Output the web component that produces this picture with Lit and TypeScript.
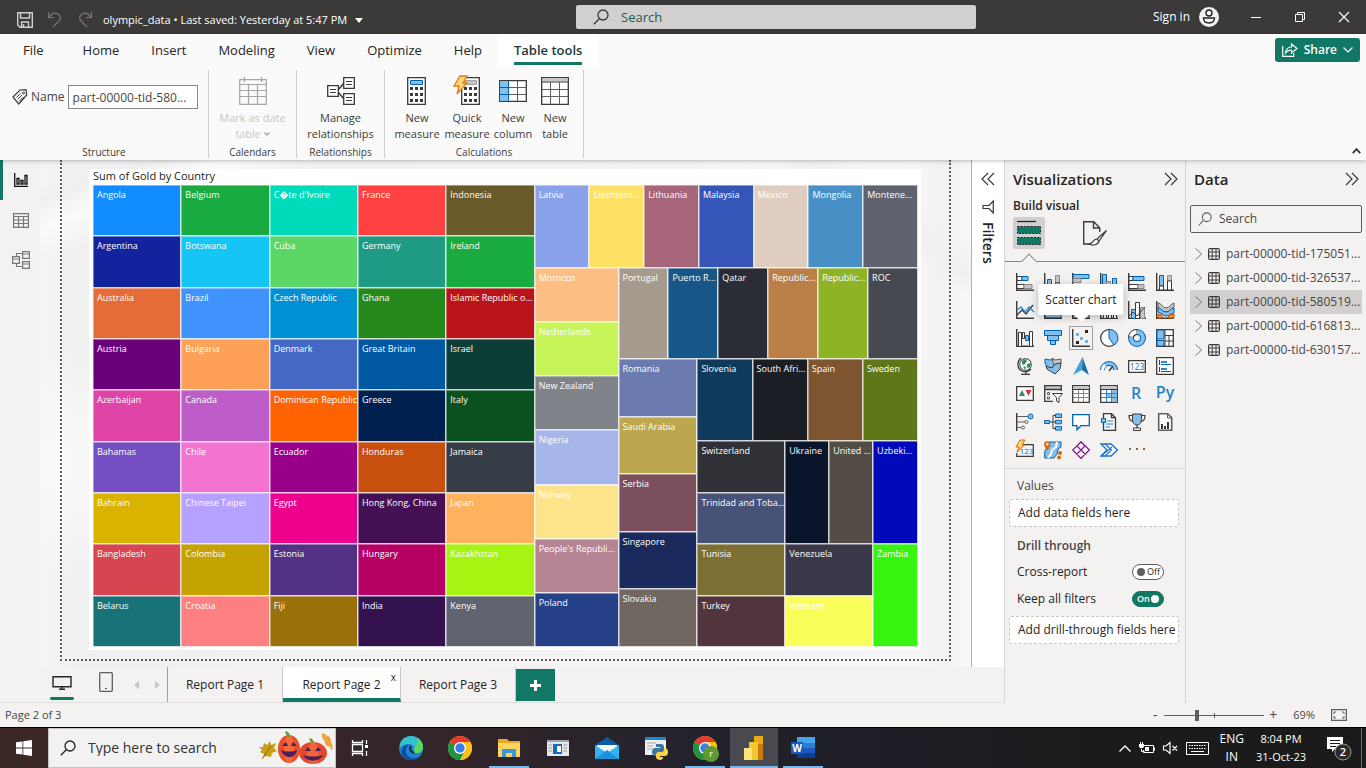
import { LitElement, html, svg, css, nothing, TemplateResult, SVGTemplateResult } from "lit";
import { customElement } from "lit/decorators.js";
import { classMap } from "lit/directives/class-map.js";
import { styleMap } from "lit/directives/style-map.js";

const D = "#3b3a39";
const B = "#0063b1";
const L = "#83beec";
const G = "#c8c6c4";

const icon = (w: number, h: number, body: SVGTemplateResult, box = `0 0 ${w} ${h}`) =>
  html`<svg width=${w} height=${h} viewBox=${box} fill="none" aria-hidden="true">${body}</svg>`;

/* ---------- treemap ---------- */

interface Leaf { size: number; name: string; color: string }
interface Branch { size: number; dir: "row" | "column"; items: Area[] }
type Area = Leaf | Branch;

const t = (name: string, color: string, size = 1): Leaf => ({ name, color, size });
const row = (size: number, ...items: Area[]): Branch => ({ dir: "row", size, items });
const col = (size: number, ...items: Area[]): Branch => ({ dir: "column", size, items });

const medals = row(1,
  col(88, t("Angola", "#118dff"), t("Argentina", "#12239e"), t("Australia", "#e66c37"), t("Austria", "#6b007b"),
    t("Azerbaijan", "#e044a7"), t("Bahamas", "#744ec2"), t("Bahrain", "#d9b300"), t("Bangladesh", "#d64550"), t("Belarus", "#197278")),
  col(88, t("Belgium", "#1aab40"), t("Botswana", "#15c6f4"), t("Brazil", "#4092ff"), t("Bulgaria", "#ffa058"),
    t("Canada", "#be5dc9"), t("Chile", "#f472d0"), t("Chinese Taipei", "#b5a1ff"), t("Colombia", "#c4a200"), t("Croatia", "#ff8080")),
  col(88, t("C\uFFFDte d'Ivoire", "#00dbbc"), t("Cuba", "#5bd667"), t("Czech Republic", "#0091d5"), t("Denmark", "#4668c5"),
    t("Dominican Republic", "#ff6300"), t("Ecuador", "#99008a"), t("Egypt", "#ec008c"), t("Estonia", "#533285"), t("Fiji", "#99700a")),
  col(88, t("France", "#ff4141"), t("Germany", "#1f9a85"), t("Ghana", "#25891c"), t("Great Britain", "#0057a2"),
    t("Greece", "#002050"), t("Honduras", "#c94f0f"), t("Hong Kong, China", "#450f54"), t("Hungary", "#b60064"), t("India", "#34124f")),
  col(88, t("Indonesia", "#6a5a29"), t("Ireland", "#1aab40"), t("Islamic Republic o...", "#ba141a"), t("Israel", "#0c3d37"),
    t("Italy", "#0b511f"), t("Jamaica", "#373d47"), t("Japan", "#ffb25e"), t("Kazakhstan", "#a6f412"), t("Kenya", "#60646e")),
  col(382,
    row(83, t("Latvia", "#8aa2ea"), t("Liechtens...", "#fee165"), t("Lithuania", "#a66578"), t("Malaysia", "#3555b8"),
      t("Mexico", "#dfcebf"), t("Mongolia", "#4891c7"), t("Montene...", "#5f636d")),
    row(379,
      col(84, t("Morocco", "#fcbe83"), t("Netherlands", "#c7f459"), t("New Zealand", "#7f838a"), t("Nigeria", "#a6b6eb"),
        t("Norway", "#fde48a"), t("People's Republi...", "#b58593"), t("Poland", "#274189")),
      col(300,
        row(91, t("Portugal", "#a59a8d"), t("Puerto R...", "#165788"), t("Qatar", "#2a2d35"), t("Republic...", "#ba8048"),
          t("Republic...", "#8eb426"), t("ROC", "#474951")),
        row(288,
          col(79, t("Romania", "#6b7bb0"), t("Saudi Arabia", "#bca74e"), t("Serbia", "#7b4f5b"), t("Singapore", "#1b2a5c"), t("Slovakia", "#706760")),
          col(221,
            row(82, t("Slovenia", "#0f3a5b"), t("South Afri...", "#1c1e25"), t("Spain", "#7d5530"), t("Sweden", "#5e7819")),
            row(206,
              col(88, t("Switzerland", "#303137"), t("Trinidad and Toba...", "#475376"), t("Tunisia", "#7d6f34"), t("Turkey", "#52353c")),
              col(88, row(2, t("Ukraine", "#0a142b"), t("United ...", "#534d46")), t("Venezuela", "#3a3748"), t("Vietnam", "#fafe5b")),
              col(45, t("Uzbeki...", "#000abb"), t("Zambia", "#36f50f"))
            )
          )
        )
      )
    )
  )
);

@customElement("tree-map")
class TreeMap extends LitElement {
  static styles = css`
    :host { display: flex; min-height: 0; font: 500 9px/12px "Open Sans", "Noto Sans", sans-serif; }
    .branch { display: flex; flex-basis: 0; min-width: 0; min-height: 0; }
    .column { flex-direction: column; }
    .tile {
      flex-basis: 0; min-width: 0; min-height: 0; color: #fff; white-space: nowrap; overflow: hidden;
      box-shadow: inset 1px 1px rgba(255, 255, 255, 0.4), inset -1px -1px rgba(255, 255, 255, 0.8);
    }
    .label { display: block; padding: 4px 0 0 4px; }
  `;
  private area(a: Area): TemplateResult {
    return "items" in a
      ? html`<div class=${classMap({ branch: true, column: a.dir === "column" })} style=${styleMap({ flexGrow: String(a.size) })}>${a.items.map((i) => this.area(i))}</div>`
      : html`<div class="tile" style=${styleMap({ flexGrow: String(a.size), backgroundColor: a.color })}><span class="label">${a.name}</span></div>`;
  }
  render() { return this.area(medals); }
}

/* ---------- visual gallery ---------- */

const axis = svg`<path d="M.7 0v17.3H18" stroke=${D} stroke-width="1.4"/>`;
const frame = svg`<path d="M.7 3.7h16.6v11.6H.7z" stroke=${D} stroke-width="1.3" fill="#fff"/>`;

const visuals: [string, SVGTemplateResult][] = [
  ["Stacked bar chart", svg`${axis}<path d="M1 3.5h5v4H1z" fill="#fff" stroke=${D}/><path d="M6 3.5h6v4H6z" fill=${L} stroke=${B}/><path d="M1 11.5h7v4H1z" fill="#fff" stroke=${D}/><path d="M8 11.5h8v4H8z" fill=${G} stroke="#8a8886"/>`],
  ["Stacked column chart", svg`${axis}<path d="M3.5 6.5h4V12h-4z" fill=${L} stroke=${B}/><path d="M3.5 12h4v5h-4z" fill="#fff" stroke=${D}/><path d="M11.5 2.5h4V10h-4z" fill=${G} stroke="#8a8886"/><path d="M11.5 10h4v7h-4z" fill="#fff" stroke=${D}/>`],
  ["Clustered bar chart", svg`${axis}<path d="M1 1.5h16v4H1z" fill=${L} stroke=${B}/><path d="M1 5.5h8v4H1z" fill=${G} stroke="#8a8886"/><path d="M1 11.5h11v4H1z" fill=${L} stroke=${B}/>`],
  ["Clustered column chart", svg`${axis}<path d="M2.5 1.5h4v16h-4z" fill=${L} stroke=${B}/><path d="M6.5 8.5h4v9h-4z" fill=${G} stroke="#8a8886"/><path d="M12.5 5.5h4v12h-4z" fill=${L} stroke=${B}/>`],
  ["100% stacked bar chart", svg`${axis}<path d="M1 3.5h4v4H1z" fill="#fff" stroke=${D}/><path d="M5 3.5h11v4H5z" fill=${L} stroke=${B}/><path d="M1 11.5h9v4H1z" fill="#fff" stroke=${D}/><path d="M10 11.5h6v4h-6z" fill=${G} stroke="#8a8886"/>`],
  ["100% stacked column chart", svg`${axis}<path d="M3.5 2.5h4V13h-4z" fill=${L} stroke=${B}/><path d="M3.5 13h4v4h-4z" fill="#fff" stroke=${D}/><path d="M11.5 2.5h4V8h-4z" fill=${G} stroke="#8a8886"/><path d="M11.5 8h4v9h-4z" fill="#fff" stroke=${D}/>`],

  ["Line chart", svg`${axis}<path d="m1 14 5-5 4 4 7-9" stroke=${D} stroke-width="1.4"/><path d="m1 9 4-3 4 5 4-5 5 5" stroke="#2b88d8" stroke-width="1.4"/>`],
  ["Area chart", svg`<path d="M1 17V8l4-4 4 5 4-5 4 4v9z" fill=${L} stroke=${B}/>${axis}`],
  ["Stacked area chart", svg`${axis}<path d="M1 17v-5l5-3 5 3 6-6v11z" fill=${G} stroke=${D}/>`],
  ["Line and stacked column chart", svg`${axis}<path d="M3.5 9.5h3v8h-3zM8.5 6.5h3v11h-3zM13.5 11.5h3v6h-3z" fill="#fff" stroke=${D}/>`],
  ["Line and clustered column chart", svg`${axis}<path d="M3.5 8.5h4v9h-4z" fill=${L} stroke=${B}/><path d="M7.5 1.5h4v16h-4z" fill="#fff" stroke=${D}/><path d="M12.5 6.5h4v11h-4z" fill=${G} stroke="#8a8886"/><path d="m1 15 4-4 4 4 8-9" stroke=${D}/>`],
  ["Ribbon chart", svg`${axis}<path d="M2 2c4 0 4 5 8 5s4-4 8-5v4c-4 2-4 5-8 5S6 7 2 7z" fill=${G} stroke="#605e5c"/><path d="M2 7c4 0 4 4 8 4s4-4 8-4v5c-4 0-4 3-8 3s-4-4-8-4z" fill=${L} stroke=${B}/><path d="M2 13h3l2 4H2zm11 1 5-1v4h-6z" fill="#e8912d" stroke="#ca5010"/>`],

  ["Waterfall chart", svg`${axis}<path d="M2.5 3.5h3v14h-3zM6.5 3.5h2v6h-2z" fill="#fff" stroke=${D}/><path d="M9.5 6.5h3v5h-3z" fill=${L} stroke=${B}/><path d="M13.5 2.5h3v15h-3z" fill="#fff" stroke=${D}/>`],
  ["Funnel", svg`<path d="M.5 1.5h17v5H.5zM3.5 6.5h11v5h-11zM6.5 11.5h5v4h-5z" fill=${L} stroke=${B}/>`],
  ["Scatter chart", svg`<path d="M.7 0v17.3H18" stroke=${D} stroke-width="1.4"/><path d="M13 1h3v3h-3zM4 12h3v3H4z" fill="#252423"/><path d="M4 4h3v3H4zM8 8h3v3H8zM13 11h3v3h-3z" fill="#6cb4ee"/>`],
  ["Pie chart", svg`<circle cx="9" cy="9" r="8.3" fill="#fff" stroke=${D} stroke-width="1.3"/><path d="M9 .7V9l5 7A8.3 8.3 0 0 0 9 .7z" fill=${L} stroke=${B}/>`],
  ["Donut chart", svg`<circle cx="9" cy="9" r="6" stroke=${B} stroke-width="6"/><circle cx="9" cy="9" r="6" stroke=${L} stroke-width="4"/><path d="M9 3a6 6 0 0 0-6 5" stroke=${D} stroke-width="6"/><path d="M8.5 3A6 6 0 0 0 3 7.6" stroke="#fff" stroke-width="4"/>`],
  ["Treemap", svg`<path d="M.7.7h16.6v16.6H.7z" fill="#fff" stroke=${D} stroke-width="1.3"/><path d="M1 1h7v9H1zM1 11.5h7V17H1z" fill=${L} stroke=${B}/><path d="M9 6.5h8M13 6.5V17M9 12h8M9 1v16" stroke=${D}/>`],

  ["Map", svg`<circle cx="9.5" cy="7.5" r="5.8" fill="#fff" stroke="#605e5c" stroke-width="1.2"/><path d="M6 4l3-2 2 2-2 3-3 1zM11 7l4-1-1 4-3 1zM7 9l3 1-1 3z" fill="#2f8f5b"/><path d="M5 1C1 4 1 11 5 13.5s8 1 10-1.5M10 14.5V17M5 17.3h9" stroke=${D} stroke-width="1.3"/>`],
  ["Filled map", svg`<path d="m1 2 5 1 4-1 1 5-2 4-6-1-2-4z" fill=${L} stroke=${B}/><path d="m8 1 3 2 6-1v4l-7 3-1-4z" fill=${G} stroke="#605e5c"/><path d="m17 6-1 6-5 5-8-5-1-3 6 2 3-4z" fill=${L} stroke=${D}/>`],
  ["Azure map", svg`<path d="M10.500 0 1 18l9-5z" fill="#41a5d9"/><path d="M10.500 0 17 18l-7-5z" fill="#1c6fa6"/>`],
  ["Gauge", svg`<path d="M2.5 13a6.5 6.5 0 0 1 13 0" stroke=${B} stroke-width="5"/><path d="M2.5 13a6.5 6.5 0 0 1 13 0" stroke=${L} stroke-width="3"/><path d="M2.5 13a6.5 6.5 0 0 1 2.500-5" stroke="#fff" stroke-width="3"/><path d="m9 14 4-5" stroke=${D} stroke-width="1.4"/>`],
  ["Card", svg`${frame}<text x="9" y="13" text-anchor="middle" font-size="8.500" font-family="Open Sans" fill="#0f6cbd">123</text>`],
  ["Multi-row card", svg`<path d="M.7.7h16.6v16.6H.7z" stroke=${D} stroke-width="1.3" fill="#fff"/><path d="M3.500 3v5M3.500 10v5" stroke=${D}/><path d="M5 5h6M5 12h6" stroke="#2b88d8" stroke-width="2"/><path d="M5 7.500h10M5 14.500h10" stroke=${B}/>`],

  ["KPI", svg`<path d="M.7 1.700h16.6v13.6H.7z" stroke=${D} stroke-width="1.3" fill="#fff"/><path d="m3 11 3-6 3 6z" fill="#2f8f5b"/><path d="m9.500 5 3 6 3-6z" fill="#d13438"/>`],
  ["Slicer", svg`<path d="M1 1h16v3H1z" fill=${G}/><path d="M9 16.300H.7V.700h16.600V6M.7 4.500h16.600" stroke=${D} stroke-width="1.300"/><path d="M3.500 7.500h2v2h-2zM3.500 12h2v2h-2z" stroke="#605e5c"/><path d="M8.500 8.500h10L15 12.500v5l-2.500-1.500v-3.500z" fill="#fff" stroke=${D}/>`],
  ["Table", svg`<path d="M.7.7h16.6v16.6H.7z" fill="#fff" stroke=${D} stroke-width="1.3"/><path d="M1.500 1.500h15V4h-15z" fill=${G}/><path d="M1 4.500h16" stroke=${D}/><path d="M1 8.500h16M1 12.500h16M6.500 5v12M11.500 5v12" stroke="#8a8886"/>`],
  ["Matrix", svg`<path d="M.7.7h16.6v16.6H.7z" fill="#fff" stroke=${D} stroke-width="1.3"/><path d="M1.500 1.500h15V4h-15z" fill=${G}/><path d="M12 5h5v12h-5zM7 9h5v4H7z" fill=${L}/><path d="M1 4.500h16" stroke=${D}/><path d="M1 8.500h16M1 12.500h16M6.500 5v12M11.500 5v12" stroke="#2b88d8"/>`],
  ["R script visual", svg`<text x="8" y="14" text-anchor="middle" font-size="16" font-weight="600" font-family="Open Sans" fill="#1f84c7">R</text>`],
  ["Python visual", svg`<text x="9" y="13" text-anchor="middle" font-size="16" font-weight="600" font-family="Open Sans" fill="#1f84c7">Py</text>`],

  ["Key influencers", svg`<path d="M.7 0v18" stroke=${D} stroke-width="1.4"/><path d="M1 3.500h12M1 9h8M1 14.500h5" stroke="#605e5c"/><circle cx="14.500" cy="3.500" r="2.500" fill=${L} stroke=${B}/><circle cx="10.500" cy="9" r="1.500" fill="#fff" stroke="#605e5c"/><circle cx="7" cy="14.500" r="1.500" fill="#fff" stroke="#605e5c"/>`],
  ["Decomposition tree", svg`<path d="M6 9h6M9 2.500v13M9 2.500h3M9 15.500h3" stroke=${D}/><path d="M.5 7.500h5v3h-5zM11.500 1h6v3.500h-6zM11.500 7.300h6v3.500h-6zM11.500 13.600h6v3.500h-6z" fill=${L} stroke=${B}/>`],
  ["Q&A", svg`<path d="M.7 1.700h16.600v11H9l-4 4v-4H.7z" fill="#fff" stroke=${B} stroke-width="1.300"/>`],
  ["Smart narrative", svg`<path d="M3.500 5V.7h8l4 4v12.600h-12V10M11.500.7v4h4" stroke=${D} stroke-width="1.300"/><path d="M1.500 5.500h4v4h-4z" fill=${L} stroke=${B}/><path d="M7 8h6M6 11h7M6 14h4" stroke="#2b88d8"/>`],
  ["Goals", svg`<path d="M4.500 1h9v5c0 4-2 6-4.500 6S4.500 10 4.500 6z" fill=${L} stroke=${D}/><path d="M4.500 2.500H1c0 4 1 5 4 6M13.500 2.500H17c0 4-1 5-4 6M9 12v4" stroke=${D} stroke-width="1.200"/><path d="M5.500 15h7v2.500h-7z" fill="#fff" stroke=${D}/>`],
  ["Paginated report", svg`<path d="M2.700.7h9l4 4v12.600h-13z" stroke="#605e5c" stroke-width="1.600" fill="#fff"/><path d="M5 11h2v5H5zM8 13h2v3H8zM11 9h2v7h-2z" fill=${D}/><path d="M11.500 1v4h4" stroke="#605e5c"/>`],

  ["Card (new)", svg`<path d="M7 3.700h10.300v11.600H.7V12" stroke=${D} stroke-width="1.200"/><text x="10.500" y="13" text-anchor="middle" font-size="8" font-family="Open Sans" fill="#0f6cbd">123</text><path d="M4-1h5L6 4h2.500L1 11l2-5H0z" fill="#ffd679" stroke="#d46a00"/>`],
  ["ArcGIS maps", svg`<path d="M5 1h12v5l-3 2-1 5-3 4H.7v-6z" fill=${L} stroke=${B}/><path d="M13 1l-1 5-4 3-1 4-3 4" stroke="#fff" stroke-width="2"/><path d="M3.500 9.500C1 6 0 5 0 3.500a3 3 0 0 1 6.500 0c0 1.500-.8 2.500-3 6z" fill="#d4690c"/><circle cx="16" cy="12" r="2" fill="#d4690c"/><circle cx="15" cy="16.500" r="2" fill="#d4690c"/><circle cx="3.300" cy="3.300" r="1.200" fill="#fff"/>`],
  ["Power Apps", svg`<path d="m5 5 4-4.300L17.300 9 9 17.300.7 9zM5 5l8.500 8.500M13 5l-8.500 8.500M9 1l4 4-4 4-4-4z" stroke="#881798" stroke-width="1.300" fill="#fff"/>`],
  ["Power Automate", svg`<path d="M1 3h10l6.500 6-6.500 6H1l6-6z" stroke="#1570d1" stroke-width="1.300" fill="#fff"/><path d="m5 3 6.500 6L5 15M1 15l11-9" stroke="#1570d1" stroke-width="1.100"/>`],
  ["Get more visuals", svg`<path d="M1 7h2v2H1zM8 7h2v2H8zM15 7h2v2h-2z" fill="#8a6a3c"/>`],
];

/* ---------- shared glyphs ---------- */

const magnifier = (size: number, color: string, w = 1) =>
  icon(size, size, svg`<circle cx="10" cy="6" r="5" stroke=${color} stroke-width=${w}/><path d="M6.300 9.700.8 15.200" stroke=${color} stroke-width=${w}/>`, "0 0 16 16");
const chevrons = (left: boolean) =>
  icon(14, 14, left ? svg`<path d="M7 1 1 7l6 6M13 1 7 7l6 6" stroke=${D} stroke-width="1.200"/>` : svg`<path d="m1 1 6 6-6 6M7 1l6 6-6 6" stroke=${D} stroke-width="1.200"/>`);
const calculator = (x: number, top: string, line: string) =>
  svg`<g transform="translate(${x} 0)"><path d="M.7.700h17.600v26.600H.7z" fill="#fff" stroke=${D} stroke-width="1.300"/><path d="M3.500 3.500h12v4h-12z" fill=${top} stroke=${line}/>${[10, 16, 22].map((y) => svg`<path d=${`M3 ${y}h3v3H3zM8 ${y}h3v3H8zM13 ${y}h3v3h-3z`} fill=${D}/>`)}</g>`;
const chrome = svg`<circle cx="12" cy="12" r="12" fill="#fbc116"/><path d="M12 12 1.600 6A12 12 0 0 1 22.400 6z" fill="#e33b2e"/><path d="M12 12 1.600 6A12 12 0 0 0 12 24l5-9z" fill="#229342"/><path d="M12 6h10.400A12 12 0 0 1 12 24l5.200-9z" fill="#fbc116"/><circle cx="12" cy="12" r="6" fill="#fff"/><circle cx="12" cy="12" r="4.700" fill="#3b7ded"/>`;

const apps: [string, string, TemplateResult][] = [
  ["Microsoft Edge", "", icon(24, 24, svg`<circle cx="12" cy="12" r="12" fill="#1b82d6"/><path d="M1 8C3 2 8 0 12 0c7 0 12 5 12 11 0 4-3 6-6 6-4 0-4-2-3-3 1-4-2-6-5-6-4 0-7 1-9 4z" fill="#35c1c9"/><path d="M18 1.600C22 4 24 8 24 11c0 4-3 6-6 6-3 0-4-1-3-3 2-4 4-7 3-12z" fill="#5bd65f"/><path d="M10 9c-4 2-4 8-1 11s8 3 12 0c-3 5-13 6-18-1C1 12 6 8 10 9z" fill="#0c4f9e"/><path d="M12 10c-2 3-1 5 3 7" stroke="#22222c" stroke-width="2"/>`)],
  ["Google Chrome", "", icon(24, 24, chrome)],
  ["File Explorer", "run", icon(22, 20, svg`<path d="M0 1h9l2 2h11v16H0z" fill="#e9a820"/><path d="M0 5h22v14H0z" fill="#fcd462"/><path d="M4 11h14v8h-4v-4H8v4H4z" fill="#3c96dc"/>`)],
  ["News", "", icon(22, 18, svg`<path d="M0 1h22v16H0z" fill="#e8e8e8"/><path d="M0 1h22v2H0z" fill="#a0a4aa"/><path d="M6 5h9v10H6z" fill="#0f6fc5"/><path d="M10 7h4v6h-4z" fill="#fff"/><path d="M1.500 6H5M1.500 9H5M1.500 12H5M16.500 6H20M16.500 9H20M16.500 12H20" stroke="#999"/>`)],
  ["Mail", "", icon(24, 24, svg`<path d="M0 9 12 1l12 8v13H0z" fill="#0c59a4"/><path d="M2 9h20v9H2z" fill="#f5f5f5"/><path d="m0 9 12 8 12-8v14H0z" fill="#33b4f0"/><path d="m0 23 12-9 12 9z" fill="#1d91dc"/>`)],
  ["Python", "", icon(24, 24, svg`<path d="M1 1h21v18H1z" fill="#eceef0"/><path d="M1 1h21v3H1z" fill="#1889d1"/><path d="M3 7h9M3 10h6M3 13h5" stroke="#aaa"/><path d="M12 8h5c2 0 3 1 3 3v3c0 2-1 3-3 3h-4v3h-2c-2 0-3-2-3-4s1-4 3-4h5v-1h-4z" fill="#3a75a8"/><path d="M20 12h1c2 0 3 2 3 4s-1 4-3 4h-5v1h3c0 2-1 3-3 3s-4-1-4-3v-2c0-2 1-3 3-3h3c2 0 2-2 2-4z" fill="#fdd33f"/>`)],
  ["Google Chrome, profile r", "run", icon(24, 24, svg`${chrome}<circle cx="18" cy="18" r="8" fill="#5f9a36"/><text x="18" y="21" text-anchor="middle" font-size="9" font-family="Open Sans" fill="#fff">r</text>`)],
  ["Power BI Desktop", "run current", icon(24, 24, svg`<path d="M12 0h9v24h-9z" fill="#e6a910"/><path d="M7 6h9v18H7z" fill="#f2c830"/><path d="M2 12h8v12H2z" fill="#fbe27a"/><path d="M16 8h5v16h-5z" fill="#ca7a0a"/>`)],
  ["Word", "run", icon(24, 24, svg`<path d="M6 1h18v6H6z" fill="#41a5ee"/><path d="M6 7h18v5H6z" fill="#2b7cd3"/><path d="M6 12h18v5H6z" fill="#185abd"/><path d="M6 17h18v5H6z" fill="#103f91"/><path d="M0 6h12v12H0z" fill="#185abd"/><text x="6" y="15.500" text-anchor="middle" font-size="10" font-weight="700" font-family="Open Sans" fill="#fff">W</text>`)],
];

@customElement("app-root")
class AppRoot extends LitElement {
  static styles = css`
    :host {
      display: grid; grid-template-rows: 34px 126px minmax(0, 1fr) 24px 41px; height: 100vh; min-width: 1100px;
      overflow: hidden; color: #252423; font: 12px/16px "Open Sans", "Noto Sans", sans-serif; background: #f3f2f1;
    }
    * { box-sizing: border-box; }
    button, input { font: inherit; color: inherit; margin: 0; padding: 0; border: 0; background: none; border-radius: 0; }
    svg { display: block; flex: none; overflow: visible; }
    h2, h3 { margin: 0; font-weight: 600; }

    .title { display: grid; grid-template-columns: 576fr 400fr 390fr; align-items: center; background: #3b3a39; color: #fff; }
    .title-left { display: flex; align-items: center; padding: 6px 0 0 17px; gap: 14px; }
    .title-left button { display: flex; }
    .title-left .file { display: flex; align-items: center; gap: 8px; white-space: nowrap; font-size: 11px; font-weight: 500; margin-left: -4px; }
    .find { display: flex; align-items: center; gap: 12px; height: 24px; padding-left: 17px; background: #d2d0ce; border-radius: 2px; }
    .find input { flex: 1; font-size: 13px; outline: none; }
    .find input::placeholder { color: #1f5c4d; opacity: 1; }
    .title-right { display: flex; justify-content: flex-end; align-items: center; }
    .sign { display: flex; align-items: center; gap: 9px; margin-right: 15px; }
    .win { width: 44px; height: 34px; display: grid; place-items: center; }

    .ribbon { display: grid; grid-template-rows: 32px 1fr; background: #fafafa; box-shadow: 0 1px 4px rgba(0, 0, 0, 0.25); position: relative; z-index: 2; }
    .menu { display: flex; padding-left: 7px; }
    .menu button { padding: 0 16px; font-size: 13px; white-space: nowrap; }
    .menu button:first-child { margin-right: 7px; }
    .menu .active { display: flex; background: #fff; font-weight: 600; color: #1c3b36; }
    .active span { height: 31px; line-height: 32px; border-bottom: 3px solid #117865; }
    .menu .share { display: flex; align-items: center; gap: 6px; margin: 4px 6px 4px auto; padding: 0 7px; border-radius: 3px; background: #117865; color: #fff; font-size: 12px; font-weight: 600; }
    .groups { display: flex; padding: 4px 0 2px; }
    .group { display: grid; grid-template-rows: 1fr 15px; border-right: 1px solid #d2d0ce; justify-items: center; }
    .group small { font-size: 10px; line-height: 18px; color: #3b3a39; }
    .structure { width: 209px; }
    .mid { width: 88px; }
    .calc { width: 199px; }
    .name { display: flex; align-items: center; gap: 3px; height: 54px; justify-self: start; padding-left: 12px; color: #484644; }
    .name input { width: 130px; height: 24px; padding: 0 4px; border: 1px solid #8a8886; background: #fff; }
    .tools { display: flex; }
    .tool { display: flex; flex-direction: column; align-items: center; gap: 5px; padding-top: 7px; width: 50px; height: 72px; font-size: 11px; color: #3b3a39; white-space: nowrap; }
    .tool.wide { width: 86px; }
    .tool.slim { width: 42px; }
    .tool.off { color: #c8c6c4; }
    .drop { display: flex; align-items: center; justify-content: center; gap: 3px; }
    .collapse { margin: auto 5px 4px auto; display: flex; }

    .main { display: grid; grid-template-columns: minmax(0, 1fr) 181px 181px; }
    .left { display: grid; grid-template-rows: minmax(0, 1fr) 36px; min-width: 0; }
    .work { display: grid; grid-template-columns: 40px minmax(0, 1fr) 32px; min-height: 0; }
    .rail { display: flex; flex-direction: column; }
    .rail button { height: 40px; width: 40px; display: grid; place-items: center; border-left: 3px solid transparent; padding-right: 2px; }
    .rail .on { border-color: #117865; }
    .canvas {
      display: flex; padding: 0 20px 6px; border-right: 1px solid #b3b0ad; min-height: 0;
      background:
        linear-gradient(35deg, transparent 88%, #f0f0f0 90%, transparent 93%),
        linear-gradient(160deg, transparent 3%, #efefef 5%, #fbfbfb 8%, transparent 12%),
        radial-gradient(circle at 2% 60%, #fafafa, transparent 12%),
        linear-gradient(90deg, #f4f4f4, #f0f0f0 4%, #f6f6f6 94%, #f1f1f1 97%, #f8f8f8);
    }
    .sheet { flex: 1; display: flex; min-width: 0; border: 2px dotted #605e5c; border-top: 0; padding: 9px 28px 9px 27px; }
    .visual { flex: 1; display: grid; grid-template-rows: 16px minmax(0, 1fr); min-width: 0; background: #fff; padding: 0 3px 3px 4px; }
    .visual h3 { font-size: 11px; line-height: 14px; font-weight: 400; }
    .filters { display: flex; flex-direction: column; align-items: center; padding-top: 12px; gap: 14px; background: #fff; }
    .filters button { display: flex; }
    .filters h2 { writing-mode: vertical-rl; font-size: 14px; line-height: 20px; margin-top: -6px; }

    .pages { display: flex; border-bottom: 1px solid #e1dfdd; }
    .device { width: 36px; display: flex; justify-content: center; padding-top: 5px; }
    .device.on { flex-direction: column; align-items: center; gap: 7px; padding-top: 7px; }
    .device.on::after { content: ""; width: 24px; height: 3px; border-radius: 2px; background: #117865; }
    .lead { display: flex; width: 168px; padding-left: 44px; gap: 8px; border-right: 1px solid #a19f9d; }
    .arrows { display: flex; align-items: center; gap: 16px; margin-left: 2px; }
    .page { flex: none; width: 115px; border-right: 1px solid #c8c6c4; position: relative; white-space: nowrap; }
    .page.on { width: 118px; background: #fff; border-bottom: 4px solid #117865; padding-top: 4px; font-weight: 500; }
    .close { position: absolute; top: 2px; right: 4px; font-size: 10px; }
    .add { width: 39px; height: 32px; margin-top: 2px; background: #117865; display: grid; place-items: center; }

    .pane { border-left: 1px solid #d8d6d4; min-width: 0; }
    .head { display: flex; justify-content: space-between; align-items: center; height: 38px; padding: 0 7px 0 8px; }
    .head h2 { font-size: 15px; line-height: 20px; }
    .head button { display: flex; }
    .build { font-size: 12px; line-height: 16px; padding-left: 8px; }
    .modes { display: flex; gap: 34px; padding: 3px 8px 12px; border-bottom: 1px solid #8a8886; }
    .mode { width: 32px; height: 32px; display: grid; place-items: center; border-radius: 2px; position: relative; }
    .mode.on { background: #d2d0ce; }
    .mode.on::after { content: ""; position: absolute; left: 10px; bottom: -19px; width: 11px; height: 11px; background: #f3f2f1; border: 1px solid #8a8886; border-width: 1px 0 0 1px; transform: rotate(45deg); clip-path: polygon(-10% -10%, 110% -10%, -10% 110%); }
    .gallery { display: grid; grid-template-columns: repeat(6, 28px); grid-auto-rows: 28px; padding: 6px 0 4px 6px; border-bottom: 1px solid #d8d6d4; }
    .pick { display: grid; place-items: center; position: relative; }
    .pick.over::before { content: ""; position: absolute; inset: 2px; border: 1px solid #a19f9d; }
    .tip {
      position: absolute; z-index: 3; left: 50%; bottom: 37px; transform: translateX(-50%); white-space: nowrap;
      padding: 7px; line-height: 17px; border-radius: 2px; background: #fff; color: #252423; box-shadow: 0 2px 8px rgba(0, 0, 0, 0.25);
    }
    .tip::after { content: ""; position: absolute; left: calc(50% - 7px); top: 100%; border: 7px solid transparent; border-top-color: #fff; border-bottom: 0; }
    .wells { display: flex; flex-direction: column; padding: 8px 6px 0 4px; }
    .wells h3, .switch { padding: 0 15px 0 8px; }
    .wells h3 { font-size: 12px; line-height: 18px; color: #484644; }
    .wells .plain { font-weight: 400; }
    .well { height: 28px; margin: 4px 0 10px; padding: 0 8px; border: 1px dashed #c8c6c4; border-radius: 2px; background: #fff; display: flex; align-items: center; white-space: nowrap; }
    .switch { display: flex; justify-content: space-between; align-items: center; height: 27px; }
    .wells h3 + .switch { margin-top: 3px; }
    .toggle { position: relative; width: 32px; height: 16px; }
    .toggle input { appearance: none; display: block; width: 32px; height: 16px; border: 1px solid #605e5c; border-radius: 8px; background: #fff; }
    .toggle input:checked { background: #117865; border-color: #117865; }
    .toggle i { position: absolute; left: 5px; top: 4px; width: 8px; height: 8px; border-radius: 50%; background: #605e5c; pointer-events: none; }
    .toggle b { position: absolute; left: 15px; top: 0; font-size: 9px; font-weight: 400; pointer-events: none; }
    .toggle input:checked ~ i { left: 19px; background: #fff; }
    .toggle input:checked ~ b { left: 5px; color: #fff; font-weight: 600; }

    .lookup { display: flex; align-items: center; gap: 7px; height: 28px; margin: 7px 4px 9px; padding-left: 7px; border: 1px solid #605e5c; border-radius: 2px; }
    .lookup input { flex: 1; min-width: 0; outline: none; }
    .lookup input::placeholder { color: #484644; opacity: 1; }
    .tables { list-style: none; margin: 0; padding: 0 4px; }
    .tables button { display: flex; align-items: center; width: 100%; height: 24px; padding-left: 5px; gap: 6px; white-space: nowrap; color: #484644; }
    .tables .on { background: #d2d0ce; }

    .status { display: flex; align-items: center; padding: 0 19px 0 5px; color: #484644; font-size: 11px; }
    .zoom { display: flex; align-items: center; gap: 5px; margin-left: auto; margin-right: 16px; }
    .zoom button { width: 8px; font-size: 14px; }
    .zoom input {
      appearance: none; width: 100px; height: 12px;
      background: linear-gradient(#605e5c, #605e5c) 50px 50% / 1px 5px no-repeat, linear-gradient(#605e5c, #605e5c) 0 50% / 100% 1px no-repeat;
    }
    .zoom input::-webkit-slider-thumb { appearance: none; width: 4px; height: 11px; background: #605e5c; }
    .pct { margin-right: 16px; }

    .taskbar { display: flex; align-items: stretch; border-top: 1px solid #000; color: #fff; background: linear-gradient(90deg, #3c2824, #33252a 32%, #22222c 52%, #1e1e26 66%, #1b1b1b 82%); }
    .slot { display: grid; place-items: center; width: 48px; flex: none; }
    .slot.run { background: linear-gradient(#76b9ed, #76b9ed) 50% 100% / 40px 2px no-repeat; }
    .slot.current { background: linear-gradient(#76b9ed, #76b9ed) 50% 100% / 48px 2px no-repeat #494a50; }
    .apps { display: flex; gap: 1px; margin-left: 3px; }
    .type { display: flex; align-items: center; gap: 12px; width: 288px; padding: 0 2px 0 11px; background: #f2f2f2; border: 1px solid #c4c4c4; color: #222; }
    .type input { flex: 1; min-width: 0; font-size: 14px; outline: none; }
    .type input::placeholder { color: #333; opacity: 1; }
    .tray { display: flex; align-items: center; margin-left: auto; gap: 8px; white-space: nowrap; text-align: center; font-size: 11px; line-height: 18px; }
    .tray button { display: flex; }
    .tray .lang { display: block; margin: 0 4px 0 3px; font-size: 12px; }
    .clock { margin-right: 12px; }
    .edge { align-self: stretch; width: 1px; background: #6b6b6b; margin: 0 4px 0 1px; }
  `;

  render() {
    return html`${this.titleBar()}${this.ribbon()}
      <main class="main">
        <div class="left">${this.work()}${this.pages()}</div>
        ${this.visualizations()}${this.data()}
      </main>
      ${this.status()}${this.taskbar()}`;
  }

  private titleBar() {
    return html`<header class="title">
      <div class="title-left">
        <button aria-label="Save">${icon(16, 16, svg`<path d="M.7.700h14.600v14.600H3L.7 13z" stroke="#d2d0ce" stroke-width="1.400"/><path d="M3.500 1v5h9V1M4.500 15v-5h7v5M6.500 12v3" stroke="#d2d0ce" stroke-width="1.400"/>`)}</button>
        <button aria-label="Undo">${icon(16, 16, svg`<path d="M1.500 0v5.500H7M2 5c3-4 6-4.500 9-3 3 2 3 5 1 7l-6 6" stroke="#797775" stroke-width="1.200"/>`)}</button>
        <button aria-label="Redo">${icon(16, 16, svg`<path d="M14.500 0v5.500H9M14 5c-3-4-6-4.500-9-3-3 2-3 5-1 7l6 6" stroke="#797775" stroke-width="1.200"/>`)}</button>
        <button class="file">olympic_data • Last saved: Yesterday at 5:47 PM ${icon(8, 5, svg`<path d="M0 0h8L4 5z" fill="#fff"/>`)}</button>
      </div>
      <label class="find">${magnifier(16, "#3b3a39", 1.3)}<input type="search" aria-label="Search" placeholder="Search"></label>
      <div class="title-right">
        <button class="sign">Sign in ${icon(20, 20, svg`<circle cx="10" cy="10" r="10" fill="#f3f2f1"/><circle cx="10" cy="6" r="3" stroke="#222" stroke-width="1.400"/><path d="M4.500 11h11c0 3.500-2.500 5-5.500 5s-5.500-1.500-5.500-5z" stroke="#222" stroke-width="1.400"/>`)}</button>
        <button class="win" aria-label="Minimize">${icon(10, 10, svg`<path d="M0 5.500h10" stroke="#fff"/>`)}</button>
        <button class="win" aria-label="Restore">${icon(10, 10, svg`<path d="M.5 2.500h7v7h-7zM2.500 2V.500h7v7H8" stroke="#fff"/>`)}</button>
        <button class="win" aria-label="Close">${icon(10, 10, svg`<path d="m0 0 10 10M10 0 0 10" stroke="#fff" stroke-width="1.200"/>`)}</button>
      </div>
    </header>`;
  }

  private ribbon() {
    const tabs = ["File", "Home", "Insert", "Modeling", "View", "Optimize", "Help"];
    return html`<section class="ribbon">
      <nav class="menu">
        ${tabs.map((n) => html`<button>${n}</button>`)}
        <button class="active"><span>Table tools</span></button>
        <button class="share">${icon(16, 14, svg`<path d="M.7 3v10.300h11V10M3.500 10c.5-4 3-6 6-6V1l5.500 4.500L9.500 10V7c-3 0-4.500 1-6 3z" stroke="#fff" stroke-width="1.200"/>`)}Share${icon(10, 6, svg`<path d="m.5.500 4.500 4.500L9.500.500" stroke="#fff" stroke-width="1.200"/>`)}</button>
      </nav>
      <div class="groups">
        <div class="group structure">
          <label class="name">${icon(16, 16, svg`<path d="m1 8 7-7 6-.3.700 5.300-8 9z" stroke=${D} stroke-width="1.200"/><circle cx="11.500" cy="4" r="1" stroke=${D}/><path d="m4.500 8.500 4-4M6 10l4-4M7.500 12l4-4" stroke=${D}/>`)}Name<input value="part-00000-tid-580..."></label>
          <small>Structure</small>
        </div>
        <div class="group mid">
          <button class="tool wide off" disabled>${icon(28, 28, svg`<path d="M.7 2.700h26.600v24.600H.7zM1 7.500h26M1 13.500h26M1 19.500h26M9.500 8v19M18.500 8v19M5.500 0v5M22.500 0v5" stroke="#a8a6a4" stroke-width="1.200"/>`)}<span>Mark as date<span class="drop">table ${icon(6, 4, svg`<path d="m.5.500 2.500 2.500L5.500.500" stroke="#a8a6a4" stroke-width="1.400"/>`)}</span></span></button>
          <small>Calendars</small>
        </div>
        <div class="group mid">
          <button class="tool wide">${icon(28, 28, svg`<path d="M11 13 17 6M11 15l6 7" stroke=${D} stroke-width="1.500"/><path d="M.7 8.700h10.600v10.600H.7zM16.700.700h10.600v10.600H16.700zM16.700 16.700h10.600v10.600H16.700z" fill="#fff" stroke=${D} stroke-width="1.300"/><path d="M3 12.500h6M3 15.500h6M19 4.500h6M19 7.500h6M19 20.500h6M19 23.500h6" stroke=${D}/>`)}<span>Manage<br>relationships</span></button>
          <small>Relationships</small>
        </div>
        <div class="group calc">
          <div class="tools">
            <button class="tool">${icon(20, 28, calculator(0, L, B))}<span>New<br>measure</span></button>
            <button class="tool">${icon(26, 28, svg`${calculator(7, G, "#a19f9d")}<path d="M6-1h7L9 6h4L3 17l2-8H0z" fill="#ffd679" stroke="#e07b16" stroke-width="1.300"/>`)}<span>Quick<br>measure</span></button>
            <button class="tool slim">${icon(28, 28, svg`<path d="M.7 3.700h26.600v20.600H.7z" fill="#fff" stroke=${D} stroke-width="1.300"/><path d="M1 4h9v20H1z" fill=${L}/><path d="M10 10.500h17M10 17.500h17M18.500 4v20" stroke="#605e5c"/><path d="M9.500 4v20M1 10.500h9M1 17.500h9" stroke=${B}/>`)}<span>New<br>column</span></button>
            <button class="tool slim">${icon(28, 28, svg`<path d="M.7.700h26.600v26.600H.7z" fill="#fff" stroke=${D} stroke-width="1.300"/><path d="M1.500 1.500h25v3h-25z" fill=${G}/><path d="M1 5h26" stroke=${D}/><path d="M1 12.500h26M1 19.500h26M9.500 5v22M18.500 5v22" stroke="#605e5c"/>`)}<span>New<br>table</span></button>
          </div>
          <small>Calculations</small>
        </div>
        <button class="collapse" aria-label="Collapse ribbon">${icon(9, 6, svg`<path d="m.8 5.200 3.700-4 3.700 4" stroke=${D} stroke-width="1.800"/>`)}</button>
      </div>
    </section>`;
  }

  private work() {
    return html`<div class="work">
      <nav class="rail">
        <button class="on" aria-label="Report view">${icon(14, 14, svg`<path d="M.7 0v13.300H14M3 5.500h2v5.500H3zM7 7.500h2V11H7zM11 2.500h2V11h-2z" stroke="#111" stroke-width="1.300"/>`)}</button>
        <button aria-label="Table view">${icon(16, 15, svg`<path d="M.6.600h14.800v13.800H.6zM1 3.500h14M1 7h14M1 10.500h14M5.500 3.500V14M10.500 3.500V14" stroke="#797775" stroke-width="1.200"/>`)}</button>
        <button aria-label="Model view">${icon(18, 18, svg`<path d="M.6 5.600h6.800v6.800H.6zM10.600.600h6.800v6.800h-6.800zM10.600 10.600h6.800v6.800h-6.800zM1 8h6.500M11 3h6.500M11 13h6.500M4.500 5.500V2.500h6M4.500 12.500v3h6" stroke="#797775" stroke-width="1.200"/>`)}</button>
      </nav>
      <div class="canvas"><div class="sheet"><section class="visual"><h3>Sum of Gold by Country</h3><tree-map></tree-map></section></div></div>
      <aside class="filters">
        <button aria-label="Expand filters">${chevrons(true)}</button>
        ${icon(12, 14, svg`<path d="M11.300 1v12L7 8.500H1v-3h6z" stroke=${D} stroke-width="1.200"/>`)}
        <h2>Filters</h2>
      </aside>
    </div>`;
  }

  private pages() {
    return html`<nav class="pages">
      <div class="lead">
        <button class="device on" aria-label="Desktop layout">${icon(20, 14, svg`<path d="M1 .700h18v10H1z" stroke="#252423" stroke-width="1.400"/><path d="M10 11v2M7 13.300h6" stroke="#252423" stroke-width="1.400"/>`)}</button>
        <button class="device" aria-label="Mobile layout">${icon(14, 20, svg`<rect x=".7" y=".7" width="12.600" height="18.600" rx="1" stroke="#605e5c" stroke-width="1.300"/><path d="M6 16.500h2" stroke="#605e5c"/>`)}</button>
        <div class="arrows">${icon(5, 8, svg`<path d="M5 0v8L0 4z" fill="#c8c6c4"/>`)}${icon(5, 8, svg`<path d="M0 0v8l5-4z" fill="#c8c6c4"/>`)}</div>
      </div>
      <button class="page">Report Page 1</button>
      <button class="page on">Report Page 2<span class="close">x</span></button>
      <button class="page">Report Page 3</button>
      <button class="add" aria-label="New page">${icon(11, 11, svg`<path d="M5.500 0v11M0 5.500h11" stroke="#fff" stroke-width="3"/>`)}</button>
    </nav>`;
  }

  private visualizations() {
    return html`<aside class="pane">
      <div class="head"><h2>Visualizations</h2><button aria-label="Collapse visualizations">${chevrons(false)}</button></div>
      <h3 class="build">Build visual</h3>
      <div class="modes">
        <button class="mode on" aria-label="Build visual">${icon(24, 24, svg`<path d="M0 .500h19" stroke="#252423" stroke-width="1.300"/><path d="M.500 5.500h23v7H.500zM.500 16.500h23v7H.500z" fill="#117865" stroke="#252423" stroke-dasharray="2 1.300"/>`)}</button>
        <button class="mode" aria-label="Format visual">${icon(24, 24, svg`<path d="M9 23H.7V.700h10l6 6V11M10.500 1v6h6" stroke=${D} stroke-width="1.400"/><path d="M23.500 9.500 14 18l2 2zM14 18c-4 0-3 4-8 5 4 2 9 1 10-3" fill="#fff" stroke=${D} stroke-width="1.200"/>`)}</button>
      </div>
      <div class="gallery">
        ${visuals.map(([name, art]) => html`<button class=${classMap({ pick: true, over: name === "Scatter chart" })} aria-label=${name}>
          ${icon(18, 18, art)}${name === "Scatter chart" ? html`<span class="tip" role="tooltip">Scatter chart</span>` : nothing}</button>`)}
      </div>
      <div class="wells">
        <h3 class="plain">Values</h3>
        <div class="well">Add data fields here</div>
        <h3>Drill through</h3>
        <label class="switch">Cross-report<span class="toggle"><input type="checkbox" role="switch"><i></i><b>Off</b></span></label>
        <label class="switch">Keep all filters<span class="toggle"><input type="checkbox" role="switch" checked><i></i><b>On</b></span></label>
        <div class="well">Add drill-through fields here</div>
      </div>
    </aside>`;
  }

  private data() {
    const ids = ["175051", "326537", "580519", "616813", "630157"];
    return html`<aside class="pane">
      <div class="head"><h2>Data</h2><button aria-label="Collapse data">${chevrons(false)}</button></div>
      <label class="lookup">${magnifier(14, "#605e5c", 1.2)}<input type="search" aria-label="Search data" placeholder="Search"></label>
      <ul class="tables">
        ${ids.map((id) => html`<li><button class=${classMap({ on: id === "580519" })}>
          ${icon(7, 12, svg`<path d="m.5.500 6 5.500-6 5.500" stroke="#797775"/>`)}
          ${icon(12, 12, svg`<rect x=".6" y=".6" width="10.800" height="10.800" rx="1.500" stroke=${D} stroke-width="1.200"/><path d="M4.200.600v10.800M8 .600v10.800M.6 4h10.800M.6 8h10.800" stroke=${D}/>`)}
          <span>part-00000-tid-${id}...</span></button></li>`)}
      </ul>
    </aside>`;
  }

  private status() {
    return html`<footer class="status">Page 2 of 3
      <div class="zoom"><button aria-label="Zoom out">-</button><input type="range" aria-label="Zoom" min="0" max="100" value="32"><button aria-label="Zoom in">+</button></div>
      <span class="pct">69%</span>
      ${icon(16, 12, svg`<path d="M.6.600h14.800v10.800H.6z" stroke="#605e5c" stroke-width="1.200"/><path d="M3 5V3h2M11 3h2v2M13 7v2h-2M5 9H3V7" stroke="#605e5c"/>`)}
    </footer>`;
  }

  private taskbar() {
    return html`<footer class="taskbar">
      <button class="slot" aria-label="Start">${icon(16, 16, svg`<path d="M0 2.300 6.500 1.400v6.200H0zM7.300 1.300 16 0v7.600H7.300zM0 8.400h6.500v6.200L0 13.700zM7.300 8.400H16V16l-8.700-1.200z" fill="#fff"/>`)}</button>
      <label class="type">${magnifier(16, "#222", 1.3)}<input type="search" aria-label="Type here to search" placeholder="Type here to search">
        ${icon(74, 34, svg`<path d="m0 16 4 0 1-4 3 2 3-4 1 4 5-2-2 5 3 3-5 2-1 4-4-1-4 1 1-3-4-2 2-2z" fill="#c9a014"/><path d="m3 28 9-13" stroke="#8a6a0a"/>
          <ellipse cx="54" cy="22" rx="14" ry="11" fill="#e4482a"/><ellipse cx="54" cy="22" rx="6" ry="11" fill="#f2653a"/><path d="M52 12c0-3-3-2-1-5 3 1 4 3 4 5z" fill="#5fa03a"/><path d="m46 20 3-4 3 4zM56 20l3-4 3 4zM44 24c6 2 15 2 20 0-3 7-16 8-20 0z" fill="#4b1f5c"/>
          <ellipse cx="30" cy="18" rx="11" ry="14" fill="#e8502a"/><ellipse cx="30" cy="18" rx="5" ry="14" fill="#f46a3c"/><path d="M28 6c0-4-3-3-1-6 3 1 4 3 4 6z" fill="#5fa03a"/><path d="m23 15 4-4 2 4zM32 15l2-4 4 4zM22 19c5 2 12 2 16 0-2 9-12 10-16 0z" fill="#4b1f5c"/>
          <path d="M63 2c2 1 3 0 5 3 3 0 4 3 4 6 2 3 2 6 1 9l-2-4c-4-1-6-3-5-6-3-2-3-4-3-8z" fill="#f0a13a"/>`)}
      </label>
      <button class="slot" aria-label="Task view">${icon(16, 16, svg`<path d="M.5 0v2.500h10V0M.5 16v-2.500h10V16M.5 4.500h10v7H.500zM14.500 0v4M14.500 11v5" stroke="#fff" stroke-width="1.300"/><path d="M13 5h3v3h-3z" fill="#fff"/>`)}</button>
      <div class="apps">${apps.map(([name, state, art]) => html`<button class="slot ${state}" aria-label=${name}>${art}</button>`)}</div>
      <div class="tray">
        <button aria-label="Show hidden icons">${icon(12, 7, svg`<path d="m.5 6.500 5.500-5.500 5.500 5.500" stroke="#fff" stroke-width="1.300"/>`)}</button>
        ${icon(16, 12, svg`<path d="M5 3.500h9.500v7H4.500V8M15.500 5.500v3M2.500 7v2.500h3" stroke="#fff"/><path d="M0 2h5v2c0 3-5 3-5 0zM1 0h1v2H1zM3 0h1v2H3zM6 5h4v4H6z" fill="#fff"/>`)}
        ${icon(15, 12, svg`<path d="M.5 4h2.500l4-3.500v11L3 8H.500zM9.500 4l4.500 4.500M14 4 9.500 8.500" stroke="#fff" stroke-width="1.200"/>`)}
        ${icon(23, 13, svg`<path d="M.5.500h22v12H.500z" stroke="#fff"/><path d="M3 3.500h17M3 6.500h17" stroke="#fff" stroke-dasharray="1.500 1"/><path d="M5 9.500h13" stroke="#fff"/>`)}
        <button class="lang">ENG<br>IN</button>
        <div class="clock">8:04 PM<br>31-Oct-23</div>
        <button aria-label="2 notifications">${icon(26, 26, svg`<path d="M1 2h16v12H9l-3 3v-3H1z" fill="#fff"/><path d="M4 5.500h10M4 8.500h10M4 11.500h6" stroke="#1b1b1b"/><circle cx="17" cy="17" r="8" fill="#2b2b2b" stroke="#999"/><text x="17" y="21" text-anchor="middle" font-size="11" font-weight="600" font-family="Open Sans" fill="#fff">2</text>`)}</button>
        <span class="edge"></span>
      </div>
    </footer>`;
  }
}
